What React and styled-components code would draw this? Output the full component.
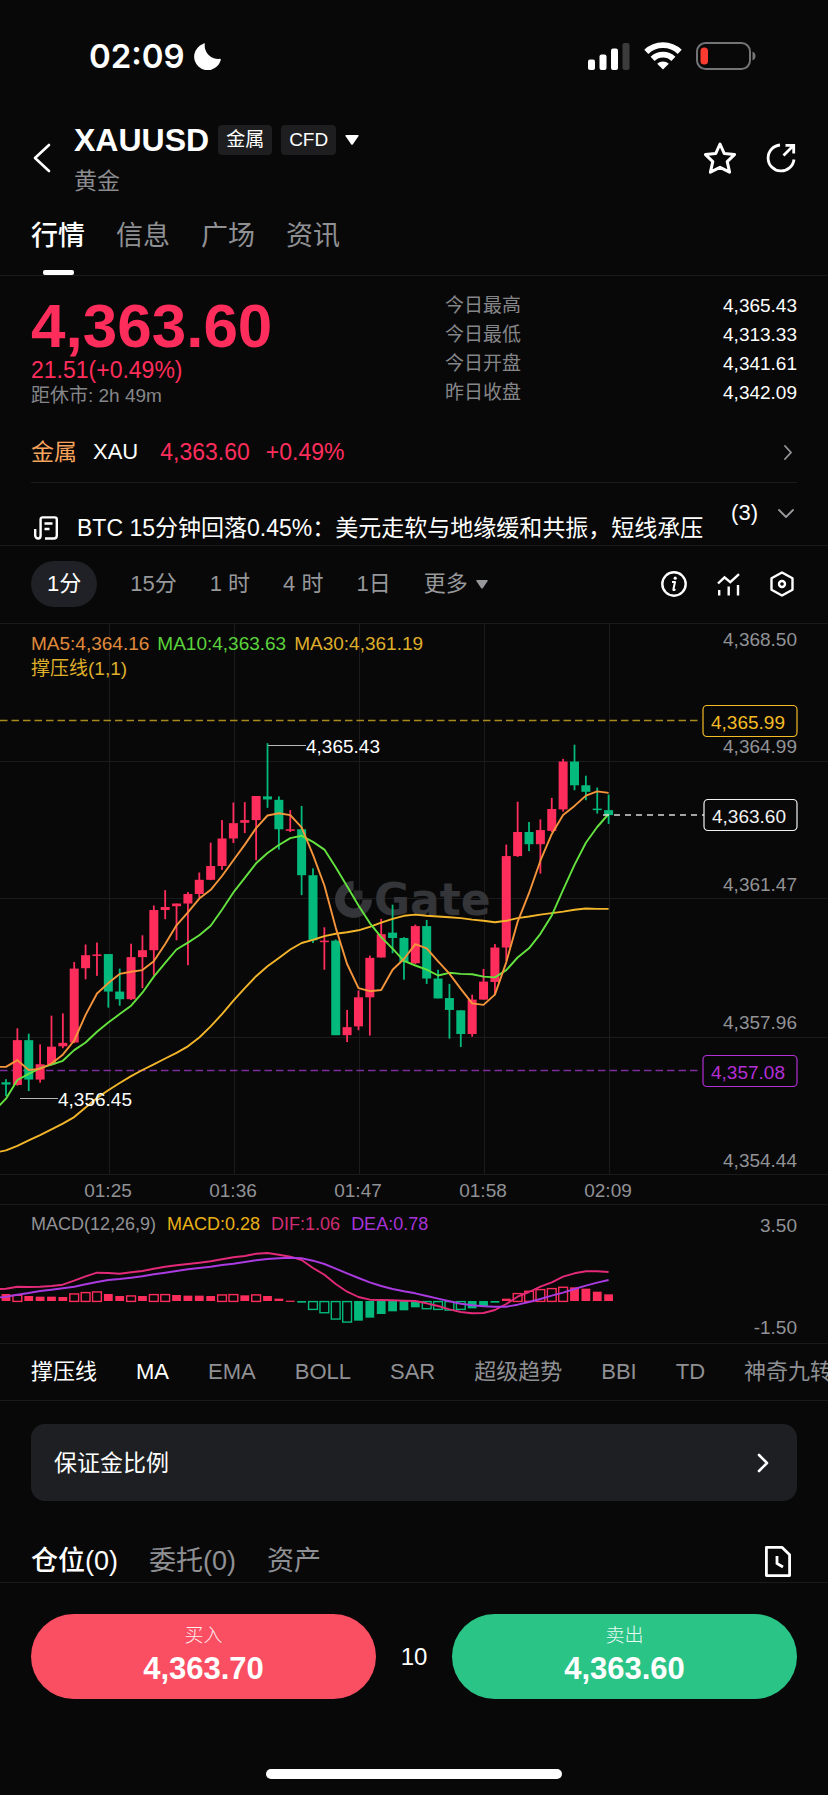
import React, { useState } from "react";
import styled, { createGlobalStyle } from "styled-components";

const UP = "#ff2d5c";
const DOWN = "#03b97c";
const LINE = "#1b1b1d";
const FONT = `"Liberation Sans", "Noto Sans CJK SC", sans-serif`;

const GlobalStyle = createGlobalStyle`
  body {
    margin: 0;
    background: #080808;
  }
  * {
    box-sizing: border-box;
  }
  button, input {
    font-family: inherit;
    line-height: inherit;
    color: inherit;
    background: none;
    border: none;
    padding: 0;
    margin: 0;
  }
  button {
    cursor: pointer;
  }
`;

const Page = styled.div`
  display: flex;
  flex-direction: column;
  min-height: 100vh;
  overflow: hidden;
  background: #080808;
  color: #fff;
  font-family: ${FONT};
  line-height: 30px;
`;

const StatusBar = styled.div`
  display: flex;
  align-items: center;
  justify-content: space-between;
  height: 114px;
  padding: 0 72px 2px 89px;
`;

const Clock = styled.div`
  display: flex;
  align-items: center;
  gap: 9px;
  font-family: Inter, sans-serif;
  font-size: 33px;
  font-weight: 600;
`;

const StatusIcons = styled.div`
  display: flex;
  align-items: center;
  gap: 14px;
`;

const Header = styled.header`
  display: flex;
  align-items: center;
  padding: 7px 32px 0 31px;
`;

const IconButton = styled.button`
  display: flex;
  align-items: center;
  justify-content: center;
  flex-shrink: 0;
`;

const Names = styled.div`
  flex: 1;
  margin-left: 20px;
`;

const TitleRow = styled.div`
  display: flex;
  align-items: center;
  height: 38px;
  gap: 9px;
`;

const Title = styled.h1`
  margin: 0;
  font-size: 32px;
  font-weight: 700;
`;

const Badge = styled.span`
  height: 30px;
  padding: 0 8px;
  border-radius: 4px;
  background: #1e1e20;
  font-size: 19px;
  line-height: 30px;
`;

const SubTitle = styled.div`
  margin-top: 8px;
  color: #8b8c90;
  font-size: 23px;
  line-height: 28px;
`;

const HeaderActions = styled.div`
  display: flex;
  gap: 30px;
`;

const Tabs = styled.nav`
  display: flex;
  gap: 31px;
  padding: 22px 31px 20px;
  border-bottom: 1px solid ${LINE};
`;

const Tab = styled.button`
  position: relative;
  color: ${(p) => (p.$active ? "#fff" : "#8f9094")};
  font-size: 27px;
  font-weight: ${(p) => (p.$active ? 500 : 400)};
  line-height: 38px;

  &::after {
    content: "";
    display: ${(p) => (p.$active ? "block" : "none")};
    position: absolute;
    left: 50%;
    bottom: -20px;
    width: 31px;
    height: 5px;
    margin-left: -15px;
    border-radius: 2px;
    background: #fff;
  }
`;

const Quote = styled.section`
  display: grid;
  grid-template-columns: 414px 1fr;
  padding: 15px 31px 12px;
`;

const Price = styled.div`
  padding-top: 3px;
  color: ${UP};
  font-size: 62px;
  font-weight: 700;
  line-height: 64px;
`;

const Change = styled.div`
  color: ${UP};
  font-size: 23px;
  line-height: 24px;
`;

const Closing = styled.div`
  color: #858689;
  font-size: 19px;
  line-height: 28px;
`;

const Stats = styled.dl`
  margin: 0;
  font-size: 19px;
  line-height: 29px;
`;

const Stat = styled.div`
  display: flex;
  justify-content: space-between;

  dt {
    color: #858689;
  }
  dd {
    margin: 0;
  }
`;

const Underlying = styled.a`
  display: flex;
  align-items: center;
  height: 61px;
  margin: 0 31px;
  border-bottom: 1px solid ${LINE};
  color: #fff;
  font-size: 22px;
  text-decoration: none;
`;

const Kind = styled.span`
  margin-right: 16px;
  color: #f7a35c;
  font-size: 23px;
`;

const UpText = styled.span`
  color: ${UP};
  margin-left: ${(p) => p.$gap}px;
  font-size: 23px;
`;

const Push = styled.span`
  display: flex;
  margin-left: auto;
`;

const News = styled.section`
  display: flex;
  height: 63px;
  padding: 0 31px;
  border-bottom: 1px solid ${LINE};
`;

const Ticker = styled.div`
  display: flex;
  align-items: flex-end;
  flex: 1;
  min-width: 0;
  gap: 19px;
  padding-left: 3px;
  overflow: hidden;
  font-size: 23px;
  line-height: 34px;
  white-space: nowrap;

  svg {
    flex-shrink: 0;
    margin-bottom: 5px;
  }
`;

const NewsToggle = styled.button`
  display: flex;
  align-items: center;
  gap: 20px;
  padding: 0 3px 2px 0;
  font-size: 22px;
  font-weight: 500;
`;

const Periods = styled.div`
  display: flex;
  align-items: center;
  gap: 33px;
  padding: 15px 31px 16px;
  border-bottom: 1px solid ${LINE};
`;

const Period = styled.button`
  display: flex;
  align-items: center;
  gap: 8px;
  height: 46px;
  padding: ${(p) => (p.$active ? "0 16px" : "0")};
  border-radius: 23px;
  background: ${(p) => (p.$active ? "#1f2126" : "none")};
  color: ${(p) => (p.$active ? "#fff" : "#97989b")};
  font-size: 22px;
  white-space: nowrap;
`;

const ChartTools = styled.div`
  display: flex;
  align-items: center;
  gap: 30px;
  margin-left: auto;
  padding-right: 3px;
`;

const Panel = styled.section`
  position: relative;
  border-bottom: 1px solid ${LINE};
`;

const Plot = styled.svg`
  display: block;
  width: 100%;
  height: auto;
  font-family: ${FONT};
  font-size: 19px;
`;

const Legend = styled.div`
  position: absolute;
  top: 7px;
  left: 31px;
  font-size: ${(p) => p.$size}px;
  line-height: 25px;
`;

const LegendRow = styled.div`
  display: flex;
  gap: ${(p) => p.$gap}px;
`;

const Series = styled.span`
  color: ${(p) => p.$color};
`;

const Indicators = styled.div`
  display: flex;
  align-items: center;
  gap: 39px;
  height: 57px;
  padding-left: 31px;
  border-bottom: 1px solid ${LINE};
  overflow: hidden;
`;

const Indicator = styled.button`
  flex-shrink: 0;
  color: ${(p) => (p.$active ? "#fff" : "#8f9094")};
  font-size: 22px;
  white-space: nowrap;
`;

const MarginCard = styled.button`
  display: flex;
  align-items: center;
  justify-content: space-between;
  height: 77px;
  margin: 23px 31px 0;
  padding: 0 28px 0 23px;
  border-radius: 14px;
  background: #1e1f23;
  font-size: 23px;
`;

const Positions = styled.div`
  display: flex;
  align-items: center;
  gap: 31px;
  margin-top: 40px;
  padding: 0 37px 1px 31px;
  border-bottom: 1px solid ${LINE};
`;

const PositionTab = styled.button`
  color: ${(p) => (p.$active ? "#fff" : "#8f9094")};
  font-size: 27px;
  font-weight: ${(p) => (p.$active ? 500 : 400)};
  line-height: 40px;
`;

const TradeBar = styled.footer`
  display: flex;
  align-items: center;
  padding: 31px 31px 70px;
`;

const TradeButton = styled.button`
  display: flex;
  flex: 1;
  flex-direction: column;
  align-items: center;
  justify-content: center;
  height: 85px;
  padding-bottom: 5px;
  border-radius: 43px;
  background: ${(p) => (p.$side === "buy" ? "#fa4e62" : "#2bc487")};
`;

const Side = styled.span`
  font-size: 19px;
  font-weight: 300;
  line-height: 30px;
  opacity: 0.9;
`;

const SidePrice = styled.span`
  font-size: 31px;
  font-weight: 700;
  line-height: 36px;
`;

const Lots = styled.input`
  width: 76px;
  font-size: 24px;
  text-align: center;
`;

const HomeBar = styled.div`
  width: 296px;
  height: 10px;
  margin: 0 auto 16px;
  border-radius: 5px;
  background: #fff;
`;

const stats = [
  ["今日最高", "4,365.43"],
  ["今日最低", "4,313.33"],
  ["今日开盘", "4,341.61"],
  ["昨日收盘", "4,342.09"],
];

const periods = ["1分", "15分", "1 时", "4 时", "1日"];
const indicators = ["撑压线", "MA", "EMA", "BOLL", "SAR", "超级趋势", "BBI", "TD", "神奇九转"];

// side, body top, body bottom, high, low -- in cents below the top of the scale
const candles = [
  ["d", 1234, 1240, 1226, 1270], ["u", 1124, 1241, 1093, 1243], ["d", 1124, 1227, 1107, 1257],
  ["u", 1187, 1227, 1135, 1235], ["u", 1141, 1187, 1060, 1190], ["u", 1131, 1140, 1054, 1145],
  ["u", 937, 1130, 920, 1132], ["u", 902, 936, 874, 965], ["u", 900, 902, 869, 956],
  ["d", 899, 997, 899, 1039], ["d", 997, 1017, 937, 1034], ["u", 907, 1017, 872, 1019],
  ["u", 889, 907, 850, 988], ["u", 784, 889, 772, 955], ["u", 776, 784, 732, 808],
  ["u", 767, 774, 767, 863], ["u", 742, 767, 737, 928], ["u", 705, 742, 686, 752],
  ["u", 669, 705, 608, 706], ["u", 597, 669, 549, 679], ["u", 557, 597, 503, 609],
  ["u", 549, 556, 502, 583], ["u", 486, 549, 486, 654], ["d", 487, 495, 348, 517],
  ["d", 496, 573, 487, 626], ["u", 573, 577, 523, 580], ["d", 573, 693, 512, 745],
  ["d", 693, 863, 675, 870], ["u", 864, 868, 829, 940], ["d", 864, 1111, 861, 1111],
  ["u", 1090, 1111, 1045, 1129], ["u", 1012, 1088, 994, 1098], ["u", 909, 1012, 903, 1112],
  ["u", 847, 908, 807, 908], ["d", 843, 857, 770, 897], ["d", 857, 920, 855, 966],
  ["u", 826, 923, 822, 925], ["d", 826, 963, 810, 977], ["d", 963, 1015, 940, 1015],
  ["d", 1014, 1045, 977, 1120], ["d", 1046, 1108, 1046, 1142], ["u", 1018, 1108, 1005, 1115],
  ["u", 971, 1018, 938, 1018], ["u", 882, 972, 873, 1005], ["u", 643, 882, 613, 917],
  ["u", 580, 643, 501, 645], ["d", 580, 612, 554, 630], ["u", 575, 612, 547, 689],
  ["u", 520, 577, 491, 580], ["u", 396, 521, 389, 527], ["d", 396, 458, 352, 471],
  ["d", 458, 475, 433, 497], ["d", 519, 522, 464, 532], ["d", 523, 536, 482, 559],
];

// each line starts one step left of the first candle
const ma5 = [1194, 1194, 1176, 1202, 1199, 1185, 1162, 1125, 1058, 1002, 975, 951, 945, 941, 918, 873, 824, 790, 754, 731, 695, 654, 613, 570, 537, 531, 536, 568, 640, 720, 830, 925, 988, 996, 993, 940, 912, 873, 884, 918, 950, 990, 1028, 1032, 1005, 920, 815, 740, 655, 585, 536, 512, 485, 474, 478];
const ma10 = [1308, 1277, 1228, 1212, 1197, 1188, 1178, 1150, 1130, 1102, 1078, 1056, 1034, 1000, 958, 922, 887, 869, 850, 825, 783, 738, 700, 662, 635, 614, 596, 590, 606, 626, 672, 722, 772, 818, 855, 885, 917, 929, 940, 955, 948, 951, 952, 958, 960, 941, 908, 884, 846, 798, 731, 666, 608, 567, 533];
const ma30 = [1418, 1412, 1400, 1386, 1372, 1357, 1342, 1325, 1300, 1275, 1255, 1236, 1218, 1202, 1187, 1172, 1157, 1140, 1117, 1088, 1056, 1021, 988, 957, 931, 909, 887, 870, 862, 852, 846, 842, 837, 828, 817, 807, 799, 796, 799, 801, 803, 805, 809, 812, 816, 812, 805, 801, 796, 792, 788, 783, 780, 781, 781];

const dif = [298, 296, 290, 291, 290, 288, 284, 272, 259, 248, 249, 251, 247, 243, 236, 230, 226, 222, 218, 214, 208, 202, 198, 191, 189, 194, 200, 210, 234, 254, 282, 305, 321, 329, 330, 331, 332, 333, 340, 348, 358, 366, 370, 369, 360, 342, 320, 306, 290, 277, 260, 250, 244, 244, 246];
const dea = [324, 320, 314, 309, 303, 299, 295, 290, 283, 276, 270, 267, 263, 259, 253, 248, 243, 238, 234, 230, 225, 221, 216, 211, 207, 205, 203, 205, 212, 222, 236, 250, 264, 277, 288, 297, 304, 310, 318, 326, 334, 341, 346, 349, 350, 350, 344, 336, 327, 317, 308, 297, 287, 278, 270];

// histogram height over (or under) the zero line, 1 = hollow bar
const bars = [
  [24, 0], [22, 1], [18, 0], [16, 0], [16, 0], [15, 0], [26, 1], [30, 1], [32, 1], [24, 0], [18, 0],
  [20, 1], [18, 0], [24, 1], [24, 1], [21, 0], [19, 0], [19, 0], [18, 0], [23, 1], [24, 1], [20, 0],
  [23, 1], [18, 0], [10, 0], [4, 0], [-8, 0], [-27, 1], [-37, 1], [-56, 1], [-65, 1], [-62, 0],
  [-53, 0], [-42, 0], [-34, 0], [-31, 0], [-22, 0], [-25, 1], [-27, 1], [-29, 1], [-27, 1], [-25, 0],
  [-18, 0], [-8, 0], [10, 0], [27, 1], [34, 1], [39, 1], [42, 1], [46, 1], [44, 0], [40, 0], [31, 0], [23, 0],
];

const xAt = (i) => 6 + i * 11.37;
const priceY = (v) => v / 2.613 - 14;
const macdY = (v) => v / 3 - 15;

const toPoints = (values, scale) =>
  values.map((v, i) => `${xAt(i - 1).toFixed(1)},${scale(v).toFixed(1)}`).join(" ");

const Polyline = ({ values, scale, color }) => (
  <polyline points={toPoints(values, scale)} fill="none" stroke={color} strokeWidth="1.9" strokeLinejoin="round" />
);

const PriceTag = ({ x, y, color, children }) => (
  <g>
    <rect x={x} y={y - 15.5} width={797 - x} height="31" rx="4" fill="#080808" stroke={color} strokeWidth="1.2" />
    <text x={x + 8} y={y + 7.5} fill={color}>{children}</text>
  </g>
);

const Watermark = () => (
  <g fill="#343538">
    <path d="M353.500 257a18.500 18.500 0 1 0 18.500 18.500h-9.500a9 9 0 1 1-9-9z" />
    <path d="M353.500 266.500h9v9h-9z" opacity=".8" />
    <text x="374" y="291" fontFamily="DejaVu Sans, sans-serif" fontWeight="700" fontSize="44">Gate</text>
  </g>
);

const PriceChart = () => (
  <Plot viewBox="0 0 828 580" role="img" aria-label="XAUUSD 1分">
    <g stroke="#1b1b1d">
      {[137.5, 274.5, 413.5, 550.5].map((y) => <line key={y} x1="0" x2="828" y1={y} y2={y} />)}
      {[109.5, 234.5, 359.5, 484.5, 609.5].map((x) => <line key={x} x1={x} x2={x} y1="0" y2="550" />)}
    </g>
    <Watermark />
    <line x1="0" x2="700" y1="96.500" y2="96.500" stroke="#a88a1c" strokeWidth="1.5" strokeDasharray="7.500 4" />
    <line x1="0" x2="700" y1="446.500" y2="446.500" stroke="#7d2c9c" strokeWidth="1.5" strokeDasharray="7.500 4" />
    {candles.map(([side, top, bottom, high, low], i) => {
      const color = side === "u" ? UP : DOWN;
      return (
        <g key={i} fill={color}>
          <rect x={xAt(i) - 0.9} y={priceY(high)} width="1.8" height={priceY(low) - priceY(high)} />
          <rect x={xAt(i) - 4.5} y={priceY(top)} width="9" height={Math.max(priceY(bottom) - priceY(top), 1.5)} />
        </g>
      );
    })}
    <Polyline values={ma30} scale={priceY} color="#f3b62b" />
    <Polyline values={ma10} scale={priceY} color="#64e33f" />
    <Polyline values={ma5} scale={priceY} color="#f5953b" />
    <line x1="603" x2="704" y1="191" y2="191" stroke="#d8d8d8" strokeWidth="1.3" strokeDasharray="6 5" />
    <g stroke="#b5b5b5">
      <line x1="268" x2="306" y1="121.500" y2="121.500" />
      <line x1="20" x2="58" y1="474.500" y2="474.500" />
    </g>
    <g fill="#fff">
      <text x="306" y="129">4,365.43</text>
      <text x="58" y="482">4,356.45</text>
    </g>
    <g fill="#919296" textAnchor="end">
      <text x="797" y="22">4,368.50</text>
      <text x="797" y="129">4,364.99</text>
      <text x="797" y="267">4,361.47</text>
      <text x="797" y="405">4,357.96</text>
      <text x="797" y="543">4,354.44</text>
    </g>
    <PriceTag x={703} y={97} color="#f5bb25">4,365.99</PriceTag>
    <PriceTag x={704} y={191} color="#f2f2f2">4,363.60</PriceTag>
    <PriceTag x={703} y={447} color="#b32fd6">4,357.08</PriceTag>
    <g fill="#919296" textAnchor="middle">
      <text x="108" y="573">01:25</text>
      <text x="233" y="573">01:36</text>
      <text x="358" y="573">01:47</text>
      <text x="483" y="573">01:58</text>
      <text x="608" y="573">02:09</text>
    </g>
  </Plot>
);

const MacdChart = () => (
  <Plot viewBox="0 0 828 138" role="img" aria-label="MACD">
    {bars.map(([h, hollow], i) => {
      const color = h > 0 ? UP : DOWN;
      const size = Math.abs(h) / 3;
      const y = h > 0 ? 97 - size : 96;
      return hollow ? (
        <rect key={i} x={xAt(i) - 4.4} y={y + 0.6} width="8.800" height={size - 1.2} fill="none" stroke={color} strokeWidth="1.4" />
      ) : (
        <rect key={i} x={xAt(i) - 4.4} y={y} width="8.800" height={Math.max(size - 1, 1.2)} fill={color} />
      );
    })}
    <Polyline values={dif} scale={macdY} color="#e22a78" />
    <Polyline values={dea} scale={macdY} color="#a93be0" />
    <g fill="#919296" textAnchor="end">
      <text x="797" y="27">3.50</text>
      <text x="797" y="129">-1.50</text>
    </g>
  </Plot>
);

const Chevron = ({ d, width, height, color = "#fff", weight = 2.2 }) => (
  <svg width={width} height={height} viewBox={`0 0 ${width} ${height}`} fill="none" stroke={color} strokeWidth={weight} strokeLinecap="round" strokeLinejoin="round">
    <path d={d} />
  </svg>
);

const MoonIcon = () => (
  <svg width="27" height="27" viewBox="0 0 27 27" fill="#fff">
    <path d="M9 1Q10-.2 10.800 .6A13.500 13.500 0 0 0 26 15.800Q27.200 16 26.600 17.500A13.500 13.500 0 1 1 9 1Z" />
  </svg>
);

const SignalIcon = () => (
  <svg width="42" height="27" viewBox="0 0 42 27" fill="#fff">
    <rect x="0" y="16.500" width="7" height="10.500" rx="2" />
    <rect x="11.500" y="11.500" width="7" height="15.500" rx="2" />
    <rect x="23" y="5.500" width="7" height="21.500" rx="2" />
    <rect x="34.500" y="0" width="7" height="27" rx="2" fill="#3b3b3c" />
  </svg>
);

const WifiIcon = () => (
  <svg width="38" height="28" viewBox="0 0 38 28" fill="none" stroke="#fff" strokeWidth="5.800">
    <path d="M2.300 9.800A24 24 0 0 1 35.700 9.800" />
    <path d="M8.600 16.800A15 15 0 0 1 29.400 16.800" />
    <path d="M19 27.500l-5.800-5.800a8.500 8.500 0 0 1 11.600 0z" fill="#fff" stroke="none" />
  </svg>
);

const BatteryIcon = () => (
  <svg width="60" height="28" viewBox="0 0 60 28">
    <rect x="1" y="1" width="53" height="26" rx="8.500" fill="none" stroke="#747476" strokeWidth="2" />
    <rect x="4.500" y="5.500" width="7.500" height="17" rx="3.500" fill="#fb3b30" />
    <path d="M56.500 9.500c4 1 4 8 0 9z" fill="#747476" />
  </svg>
);

const StarIcon = () => (
  <svg width="32" height="32" viewBox="0 0 32 32" fill="none" stroke="#fff" strokeWidth="3" strokeLinejoin="round">
    <path d="M16 2l4.300 9.600 10.200 1-7.300 7 2.400 10.600L16 25.300l-9.600 4.900 2.400-10.600-7.300-7 10.200-1z" />
  </svg>
);

const ShareIcon = () => (
  <svg width="30" height="30" viewBox="0 0 30 30" fill="none" stroke="#fff" strokeWidth="2.800">
    <path d="M14 2A13 13 0 1 0 28 16.500" />
    <path d="M17.500 12.500L27 3M19.500 2.300h8.200v8.200" />
  </svg>
);

const NewsIcon = () => (
  <svg width="24" height="24" viewBox="0 0 24 24" fill="none" stroke="#fff" strokeWidth="2.400" strokeLinejoin="round">
    <path d="M1.200 13v6.500a3 3 0 0 0 3 3q2.400 0 2.400-3V3.500Q6.600 1.400 8.700 1.400h12q2.100 0 2.100 2.100v16q0 3-3 3H11" />
    <path d="M10.500 7.500h8M10.500 13h5" />
  </svg>
);

const InfoIcon = () => (
  <svg width="26" height="26" viewBox="0 0 26 26" fill="none" stroke="#fff">
    <circle cx="13" cy="13" r="11.700" strokeWidth="2.400" />
    <path d="M11 11h3l-1.600 7.300q-.2 1.200 1 .6l1-.7" strokeWidth="2" strokeLinejoin="round" />
    <circle cx="14.200" cy="7.200" r="1.600" fill="#fff" stroke="none" />
  </svg>
);

const TrendIcon = () => (
  <svg width="23" height="23" viewBox="0 0 23 23" fill="none" stroke="#fff" strokeWidth="2.400">
    <path d="M1 10.500l6.500-6.200 5.800 4.800L22 1.200" />
    <path d="M2.200 17v5.500M11.700 13.500v9M21 12v10.500" />
  </svg>
);

const HexIcon = () => (
  <svg width="24" height="26" viewBox="0 0 24 26" fill="none" stroke="#fff" strokeWidth="2.400" strokeLinejoin="round">
    <path d="M12 1.500l10.500 5.700v11.600L12 24.500 1.500 18.800V7.200z" />
    <circle cx="12" cy="13" r="3" />
  </svg>
);

const HistoryIcon = () => (
  <svg width="26" height="31" viewBox="0 0 26 31" fill="none" stroke="#fff" strokeWidth="2.800">
    <path d="M1.400 1.400h15.800l7.400 7.400v20.800H1.400z" strokeLinejoin="round" />
    <path d="M12 10v7.500l6 3.500" />
  </svg>
);

const Caret = ({ width, height, color }) => (
  <svg width={width} height={height} viewBox="0 0 14 10" preserveAspectRatio="none" fill={color}>
    <path d="M1 0h12q1 .3.4 1.300L7.900 9.300q-.9 1-1.800 0L.6 1.300Q0 .3 1 0z" />
  </svg>
);

const App = () => {
  const [tab, setTab] = useState("行情");
  const [period, setPeriod] = useState("1分");
  const [active, setActive] = useState(["撑压线", "MA"]);
  const [position, setPosition] = useState("仓位(0)");
  const [lots, setLots] = useState("10");

  const toggleIndicator = (name) => {
    setActive(active.includes(name) ? active.filter((n) => n !== name) : [...active, name]);
  };

  return (
    <Page>
      <GlobalStyle />
      <StatusBar>
        <Clock>02:09<MoonIcon /></Clock>
        <StatusIcons>
          <SignalIcon />
          <WifiIcon />
          <BatteryIcon />
        </StatusIcons>
      </StatusBar>

      <Header>
        <IconButton aria-label="返回">
          <Chevron d="M18 2L4 15l14 13" width={23} height={30} weight={2.6} />
        </IconButton>
        <Names>
          <TitleRow>
            <Title>XAUUSD</Title>
            <Badge>金属</Badge>
            <Badge>CFD</Badge>
            <Caret width={14} height={10} color="#fff" />
          </TitleRow>
          <SubTitle>黄金</SubTitle>
        </Names>
        <HeaderActions>
          <IconButton aria-label="收藏"><StarIcon /></IconButton>
          <IconButton aria-label="分享"><ShareIcon /></IconButton>
        </HeaderActions>
      </Header>

      <Tabs>
        {["行情", "信息", "广场", "资讯"].map((name) => (
          <Tab key={name} $active={tab === name} onClick={() => setTab(name)}>{name}</Tab>
        ))}
      </Tabs>

      <Quote>
        <div>
          <Price>4,363.60</Price>
          <Change>21.51(+0.49%)</Change>
          <Closing>距休市: 2h 49m</Closing>
        </div>
        <Stats>
          {stats.map(([label, value]) => (
            <Stat key={label}>
              <dt>{label}</dt>
              <dd>{value}</dd>
            </Stat>
          ))}
        </Stats>
      </Quote>

      <Underlying href="#xau">
        <Kind>金属</Kind>
        XAU
        <UpText $gap={22}>4,363.60</UpText>
        <UpText $gap={16}>+0.49%</UpText>
        <Push>
          <Chevron d="M2 1l6 6.500L2 14" width={14} height={15} color="#97989b" weight={1.8} />
        </Push>
      </Underlying>

      <News>
        <Ticker>
          <NewsIcon />
          <span>BTC 15分钟回落0.45%：美元走软与地缘缓和共振，短线承压</span>
        </Ticker>
        <NewsToggle>
          (3)
          <Chevron d="M1 1l7 7 7-7" width={16} height={9} color="#97989b" weight={1.8} />
        </NewsToggle>
      </News>

      <Periods>
        {periods.map((name) => (
          <Period key={name} $active={period === name} onClick={() => setPeriod(name)}>{name}</Period>
        ))}
        <Period>更多<Caret width={12} height={9} color="#97989b" /></Period>
        <ChartTools>
          <IconButton aria-label="说明"><InfoIcon /></IconButton>
          <IconButton aria-label="指标"><TrendIcon /></IconButton>
          <IconButton aria-label="设置"><HexIcon /></IconButton>
        </ChartTools>
      </Periods>

      <Panel>
        <PriceChart />
        <Legend $size={19}>
          <LegendRow $gap={8}>
            <Series $color="#e08a3c">MA5:4,364.16</Series>
            <Series $color="#5bd33c">MA10:4,363.63</Series>
            <Series $color="#dfae2b">MA30:4,361.19</Series>
          </LegendRow>
          <Series $color="#dfae2b">撑压线(1,1)</Series>
        </Legend>
      </Panel>

      <Panel>
        <MacdChart />
        <Legend $size={18}>
          <LegendRow $gap={11}>
            <Series $color="#919296">MACD(12,26,9)</Series>
            <Series $color="#e9b116">MACD:0.28</Series>
            <Series $color="#cf2d74">DIF:1.06</Series>
            <Series $color="#a534d8">DEA:0.78</Series>
          </LegendRow>
        </Legend>
      </Panel>

      <Indicators>
        {indicators.map((name) => (
          <Indicator key={name} $active={active.includes(name)} onClick={() => toggleIndicator(name)}>{name}</Indicator>
        ))}
      </Indicators>

      <MarginCard>
        保证金比例
        <Chevron d="M2 2l8 8-8 8" width={12} height={20} weight={2.6} />
      </MarginCard>

      <Positions>
        {["仓位(0)", "委托(0)", "资产"].map((name) => (
          <PositionTab key={name} $active={position === name} onClick={() => setPosition(name)}>{name}</PositionTab>
        ))}
        <Push>
          <IconButton aria-label="历史记录"><HistoryIcon /></IconButton>
        </Push>
      </Positions>

      <TradeBar>
        <TradeButton $side="buy">
          <Side>买入</Side>
          <SidePrice>4,363.70</SidePrice>
        </TradeButton>
        <Lots aria-label="数量" value={lots} onChange={(e) => setLots(e.target.value)} />
        <TradeButton $side="sell">
          <Side>卖出</Side>
          <SidePrice>4,363.60</SidePrice>
        </TradeButton>
      </TradeBar>
      <HomeBar />
    </Page>
  );
};

export default App;
